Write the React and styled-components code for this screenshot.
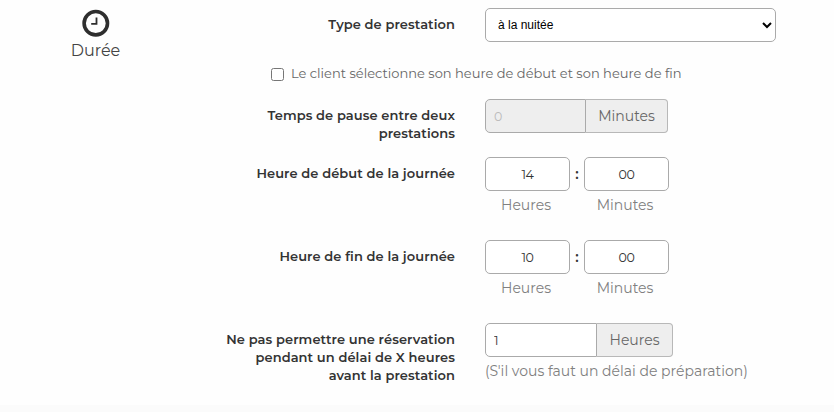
import styled, { createGlobalStyle } from "styled-components";

const App = () => {
  return (
    <Page>
      <GlobalStyle />
      <Section>
        <Aside>
          <ClockIcon viewBox="0 0 28 28">
            <circle cx="13.8" cy="14.2" r="11.7" />
            <path d="M14.5 8.5v6.4H9.2" />
          </ClockIcon>
          <AsideTitle>Durée</AsideTitle>
        </Aside>
        <Form>
          <Row $height={56}>
            <Label>Type de prestation</Label>
            <Select defaultValue="nuit">
              <option value="nuit">à la nuitée</option>
            </Select>
          </Row>
          <CheckRow>
            <CheckBox type="checkbox" />
            <CheckText>
              Le client sélectionne son heure de début et son heure de fin
            </CheckText>
          </CheckRow>
          <Row $height={58}>
            <Label>
              Temps de pause entre deux
              <br />
              prestations
            </Label>
            <Group>
              <GroupInput $width={101} defaultValue="0" disabled />
              <Addon $width={82}>Minutes</Addon>
            </Group>
          </Row>
          <Row $height={83}>
            <Label>Heure de début de la journée</Label>
            <Time hours="14" minutes="00" />
          </Row>
          <Row $height={83}>
            <Label>Heure de fin de la journée</Label>
            <Time hours="10" minutes="00" />
          </Row>
          <Row $height={82}>
            <Label>
              Ne pas permettre une réservation
              <br />
              pendant un délai de X heures
              <br />
              avant la prestation
            </Label>
            <div>
              <Group>
                <GroupInput $width={112} defaultValue="1" />
                <Addon $width={76}>Heures</Addon>
              </Group>
              <Help>(S'il vous faut un délai de préparation)</Help>
            </div>
          </Row>
        </Form>
      </Section>
      <Footer />
    </Page>
  );
};

const Time = ({ hours, minutes }) => (
  <TimeGrid>
    <TimeInput defaultValue={hours} />
    <Colon>:</Colon>
    <TimeInput defaultValue={minutes} />
    <Unit>Heures</Unit>
    <span />
    <Unit>Minutes</Unit>
  </TimeGrid>
);

const GlobalStyle = createGlobalStyle`
  * {
    box-sizing: border-box;
  }
  body {
    margin: 0;
    background: #fefefe;
    color: #333;
    font-family: Montserrat, Inter, sans-serif;
    font-size: 13px;
    line-height: 18px;
  }
`;

const Page = styled.div`
  height: 412px;
  overflow: hidden;
`;

const Section = styled.div`
  display: flex;
  height: 405px;
  padding-top: 8px;
`;

const Aside = styled.div`
  display: flex;
  flex-direction: column;
  align-items: center;
  width: 191px;
`;

const ClockIcon = styled.svg`
  width: 28px;
  height: 28px;
  margin-top: 1px;
  fill: none;
  stroke: #2e2e2e;
  stroke-width: 3.6;

  path {
    stroke-width: 1.8;
  }
`;

const AsideTitle = styled.div`
  margin-top: 5px;
  color: #444;
  font-size: 16px;
`;

const Form = styled.div`
  flex: 1;
`;

const Row = styled.div`
  display: flex;
  align-items: flex-start;
  height: ${(props) => props.$height}px;
`;

const Label = styled.label`
  width: 264px;
  margin-right: 30px;
  padding-top: 7px;
  font-weight: 600;
  letter-spacing: 0.08px;
  text-align: right;
  white-space: nowrap;
`;

const Select = styled.select`
  width: 291px;
  height: 34px;
  padding: 6px 0 6px 8px;
  border: 1px solid #aaa;
  border-radius: 5px;
  background: #fff;
  color: #000;
  font-family: "Liberation Sans", Arial, sans-serif;
  font-size: 12px;
`;

const CheckRow = styled.label`
  display: flex;
  align-items: center;
  height: 18px;
  margin: 0 0 17px 80px;
`;

const CheckBox = styled.input`
  width: 13px;
  height: 13px;
  margin: 2px 7px 0 0;
`;

const CheckText = styled.span`
  color: #666;
  letter-spacing: 0.01px;
  white-space: nowrap;
`;

const Group = styled.div`
  display: flex;
  height: 34px;
`;

const TextInput = styled.input`
  height: 34px;
  border: 1px solid #aaa;
  border-radius: 5px;
  background: #fff;
  color: #333;
  font-family: inherit;
  font-size: 12.6px;
  font-variant-numeric: lining-nums;
  letter-spacing: -0.4px;
`;

const GroupInput = styled(TextInput)`
  width: ${(props) => props.$width}px;
  padding: 6px 8px;
  border-radius: 5px 0 0 5px;

  &:disabled {
    background: #eee;
    color: #bbb;
  }
`;

const Addon = styled.span`
  display: flex;
  align-items: center;
  justify-content: center;
  width: ${(props) => props.$width}px;
  border: 1px solid #b8b8b8;
  border-left: 0;
  border-radius: 0 4px 4px 0;
  background: #eee;
  color: #666;
  font-size: 14px;
`;

const TimeGrid = styled.div`
  display: grid;
  grid-template-columns: 85px 14px 85px;
  grid-template-rows: 34px 28px;
  align-items: center;
`;

const TimeInput = styled(TextInput)`
  width: 85px;
  text-align: center;
`;

const Colon = styled.span`
  font-size: 14px;
  font-weight: 600;
  text-align: center;
`;

const Unit = styled.span`
  padding-right: 3px;
  color: #808080;
  font-size: 14px;
  text-align: center;
`;

const Help = styled.div`
  margin-top: 5px;
  color: #808080;
  font-size: 14px;
  white-space: nowrap;
`;

const Footer = styled.div`
  height: 7px;
  background: #fbfbfb;
`;

export default App;
